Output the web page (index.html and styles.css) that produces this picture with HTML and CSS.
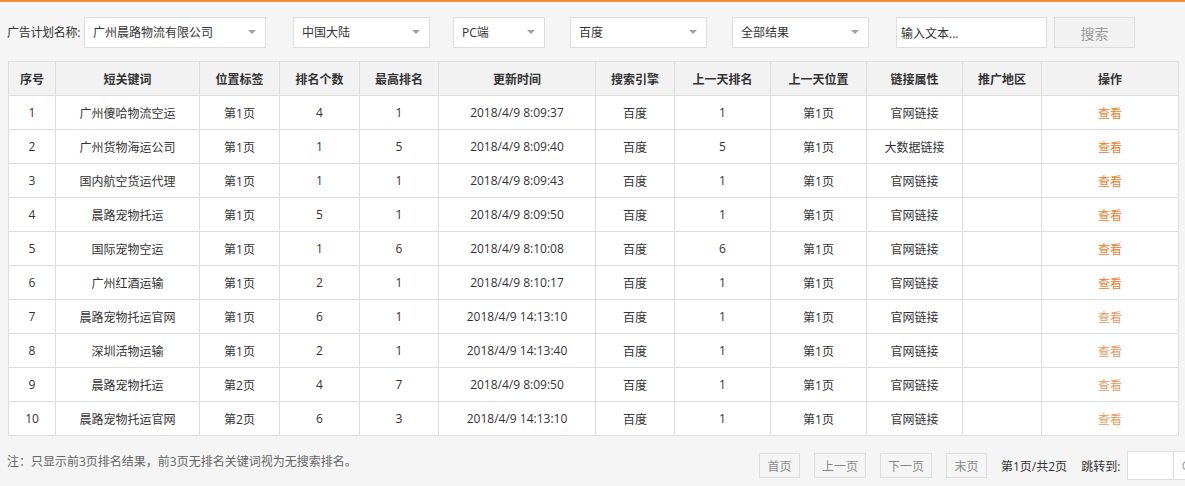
FILE: index.html
```html
<!DOCTYPE html>
<html lang="zh-CN">
<head>
    <meta charset="UTF-8">
    <meta name="viewport" content="width=device-width, initial-scale=1.0">
    <title>关键词排名</title>
    <link rel="stylesheet" href="styles.css">
</head>
<body>
    <div class="filter-bar">
        <span class="filter-label">广告计划名称:</span>
        <div class="select select-plan"><span>广州晨路物流有限公司</span><i class="arrow"></i></div>
        <div class="select select-region"><span>中国大陆</span><i class="arrow"></i></div>
        <div class="select select-device"><span>PC端</span><i class="arrow"></i></div>
        <div class="select select-engine"><span>百度</span><i class="arrow"></i></div>
        <div class="select select-result"><span>全部结果</span><i class="arrow"></i></div>
        <input type="text" class="search-input" value="输入文本...">
        <button type="button" class="search-btn">搜索</button>
    </div>

    <table class="rank-table">
        <colgroup>
            <col style="width:47px"><col style="width:144px"><col style="width:80px"><col style="width:80px">
            <col style="width:79px"><col style="width:157px"><col style="width:79px"><col style="width:96px">
            <col style="width:96px"><col style="width:96px"><col style="width:79px"><col style="width:137px">
        </colgroup>
        <thead>
            <tr>
                <th>序号</th><th>短关键词</th><th>位置标签</th><th>排名个数</th><th>最高排名</th><th>更新时间</th>
                <th>搜索引擎</th><th>上一天排名</th><th>上一天位置</th><th>链接属性</th><th>推广地区</th><th>操作</th>
            </tr>
        </thead>
        <tbody>
            <tr><td>1</td><td>广州傻哈物流空运</td><td>第1页</td><td>4</td><td>1</td><td>2018/4/9 8:09:37</td><td>百度</td><td>1</td><td>第1页</td><td>官网链接</td><td></td><td><a href="#" class="view">查看</a></td></tr>
            <tr><td>2</td><td>广州货物海运公司</td><td>第1页</td><td>1</td><td>5</td><td>2018/4/9 8:09:40</td><td>百度</td><td>5</td><td>第1页</td><td>大数据链接</td><td></td><td><a href="#" class="view">查看</a></td></tr>
            <tr><td>3</td><td>国内航空货运代理</td><td>第1页</td><td>1</td><td>1</td><td>2018/4/9 8:09:43</td><td>百度</td><td>1</td><td>第1页</td><td>官网链接</td><td></td><td><a href="#" class="view">查看</a></td></tr>
            <tr><td>4</td><td>晨路宠物托运</td><td>第1页</td><td>5</td><td>1</td><td>2018/4/9 8:09:50</td><td>百度</td><td>1</td><td>第1页</td><td>官网链接</td><td></td><td><a href="#" class="view">查看</a></td></tr>
            <tr><td>5</td><td>国际宠物空运</td><td>第1页</td><td>1</td><td>6</td><td>2018/4/9 8:10:08</td><td>百度</td><td>6</td><td>第1页</td><td>官网链接</td><td></td><td><a href="#" class="view">查看</a></td></tr>
            <tr><td>6</td><td>广州红酒运输</td><td>第1页</td><td>2</td><td>1</td><td>2018/4/9 8:10:17</td><td>百度</td><td>1</td><td>第1页</td><td>官网链接</td><td></td><td><a href="#" class="view">查看</a></td></tr>
            <tr><td>7</td><td>晨路宠物托运官网</td><td>第1页</td><td>6</td><td>1</td><td>2018/4/9 14:13:10</td><td>百度</td><td>1</td><td>第1页</td><td>官网链接</td><td></td><td><a href="#" class="view light">查看</a></td></tr>
            <tr><td>8</td><td>深圳活物运输</td><td>第1页</td><td>2</td><td>1</td><td>2018/4/9 14:13:40</td><td>百度</td><td>1</td><td>第1页</td><td>官网链接</td><td></td><td><a href="#" class="view light">查看</a></td></tr>
            <tr><td>9</td><td>晨路宠物托运</td><td>第2页</td><td>4</td><td>7</td><td>2018/4/9 8:09:50</td><td>百度</td><td>1</td><td>第1页</td><td>官网链接</td><td></td><td><a href="#" class="view light">查看</a></td></tr>
            <tr><td>10</td><td>晨路宠物托运官网</td><td>第2页</td><td>6</td><td>3</td><td>2018/4/9 14:13:10</td><td>百度</td><td>1</td><td>第1页</td><td>官网链接</td><td></td><td><a href="#" class="view light">查看</a></td></tr>
        </tbody>
    </table>

    <div class="footer">
        <p class="note">注：只显示前3页排名结果，前3页无排名关键词视为无搜索排名。</p>
        <div class="pager">
            <button type="button" class="page-btn btn-short">首页</button>
            <button type="button" class="page-btn btn-long">上一页</button>
            <button type="button" class="page-btn btn-long">下一页</button>
            <button type="button" class="page-btn btn-short">末页</button>
            <span class="page-info">第1页/共2页</span>
            <span class="jump-label">跳转到:</span>
            <input type="text" class="jump-input">
            <button type="button" class="go-btn">GO</button>
        </div>
    </div>
</body>
</html>
```

FILE: styles.css
```css
/* General */
body {
    margin: 0;
    background-color: #f5f5f5;
    border-top: 2px solid #f28a3a;
    font-family: "Open Sans", "Noto Sans CJK SC", sans-serif;
    font-size: 12px;
    color: #333;
    overflow: hidden;
}
/* Filter bar */
.filter-bar {
    display: flex;
    align-items: center;
    padding: 14px 0 0 7px;
    height: 32px;
}
.filter-label {
    flex: none;
    width: 77px;
    font-size: 12px;
    letter-spacing: -0.3px;
    white-space: nowrap;
    color: #333;
}
.select {
    display: flex;
    align-items: center;
    justify-content: space-between;
    box-sizing: border-box;
    height: 31px;
    padding: 0 9px 0 8px;
    background: #fff;
    border: 1px solid #ddd;
    color: #333;
}
.arrow {
    width: 0;
    height: 0;
    border-left: 4px solid transparent;
    border-right: 4px solid transparent;
    border-top: 4px solid #a0a0a0;
}
.select-plan { width: 182px; margin-right: 27px; }
.select-region { width: 137px; margin-right: 23px; }
.select-device { width: 92px; margin-right: 25px; }
.select-engine { width: 137px; margin-right: 25px; }
.select-result { width: 137px; margin-right: 27px; }
.search-input {
    box-sizing: border-box;
    width: 151px;
    height: 31px;
    margin: 1px 7px 0 0;
    padding: 0 4px;
    border: 1px solid #ddd;
    font-family: inherit;
    font-size: 12px;
    color: #333;
}
.search-btn {
    box-sizing: border-box;
    width: 81px;
    height: 31px;
    margin-top: 1px;
    background: #f2f2f2;
    border: 1px solid #ddd;
    color: #999;
    font-family: inherit;
    font-size: 14px;
}
/* Table */
.rank-table {
    margin: 13px 0 0 8px;
    width: 1170px;
    table-layout: fixed;
    border-collapse: collapse;
    background: #fff;
}
.rank-table th,
.rank-table td {
    height: 33px;
    padding: 0;
    border: 1px solid #ddd;
    text-align: center;
    font-size: 12px;
    white-space: nowrap;
}
.rank-table th {
    background: #f2f2f2;
    font-weight: bold;
}
.view {
    color: #f0812e;
    text-decoration: none;
}
.view.light {
    color: #ec9a62;
}
/* Footer */
.footer {
    display: flex;
    align-items: center;
    padding-top: 15px;
}
.note {
    flex: none;
    width: 752px;
    margin: 0 0 9px 7px;
    color: #666;
    font-size: 12px;
}
.pager {
    display: flex;
    align-items: center;
    flex: none;
}
.page-btn {
    box-sizing: border-box;
    height: 25px;
    padding: 0;
    margin-right: 14px;
    background: #f5f5f5;
    border: 1px solid #ddd;
    color: #888;
    font-family: inherit;
    font-size: 12px;
}
.btn-short { width: 41px; }
.btn-long { width: 52px; }
.page-info {
    font-size: 12px;
    color: #333;
    margin-right: 14px;
}
.jump-label {
    font-size: 12px;
    color: #333;
    margin-right: 7px;
}
.jump-input {
    box-sizing: border-box;
    width: 47px;
    height: 29px;
    border: 1px solid #ddd;
    background: #fff;
}
.go-btn {
    box-sizing: border-box;
    height: 29px;
    width: 34px;
    border: 1px solid #ddd;
    border-left: none;
    background: #fff;
    color: #999;
    font-family: inherit;
    font-size: 12px;
}
```
